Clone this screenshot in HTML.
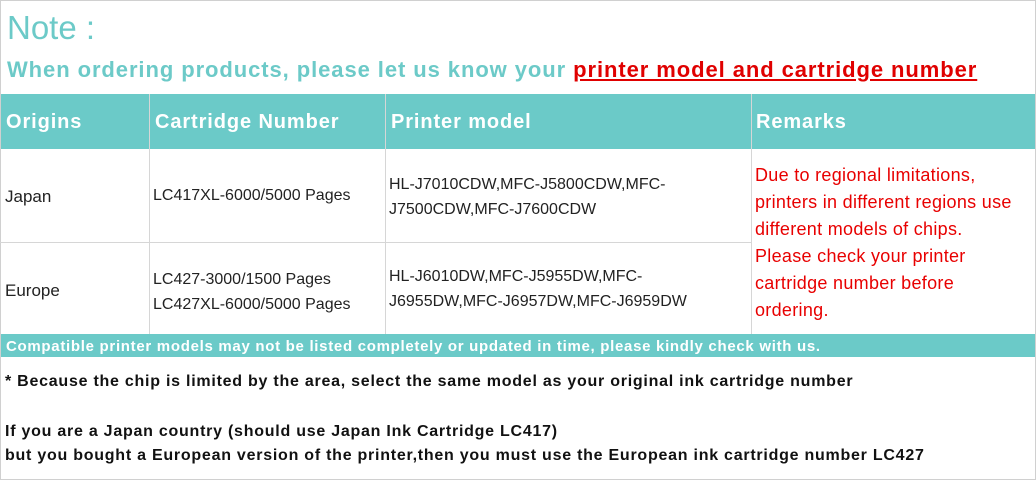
<!DOCTYPE html>
<html><head><meta charset="utf-8"><style>
*{margin:0;padding:0;box-sizing:border-box}
body{width:1036px;height:480px;background:#fff;position:relative;overflow:hidden;font-family:"Liberation Sans",Arial,sans-serif}
.a{position:absolute;white-space:nowrap}
.t{color:#6ccac8}
.hd{background:#6bcac8;color:#fff;font-weight:bold;font-size:20px;letter-spacing:0.9px}
.v{position:absolute;width:1px;background:#d6d6d6}
.h{position:absolute;height:1px;background:#d6d6d6}
.c{color:#222;font-size:16px}
.r{color:#e80000;font-size:18px;line-height:27px;letter-spacing:0.3px}
.b{color:#111;font-weight:bold;font-size:16px;letter-spacing:0.75px}
</style></head><body>
<div style="position:absolute;left:0;top:0;width:1036px;height:480px;border:1px solid #d0d0d0"></div>
<div class="a t" style="left:7px;top:9px;font-size:33px">Note :</div>
<div class="a t" style="left:7px;top:57px;font-size:22px;font-weight:bold;letter-spacing:0.92px">When ordering products, please let us know your <span style="color:#e00000;text-decoration:underline">printer model and cartridge number</span></div>
<div class="a hd" style="left:1px;top:94px;width:1034px;height:55px"></div>
<div class="a hd" style="left:6px;top:111px;background:none">Origins</div>
<div class="a hd" style="left:155px;top:111px;background:none">Cartridge Number</div>
<div class="a hd" style="left:391px;top:111px;background:none">Printer model</div>
<div class="a hd" style="left:756px;top:111px;background:none">Remarks</div>
<div class="v" style="left:149px;top:94px;height:240px"></div>
<div class="v" style="left:385px;top:94px;height:240px"></div>
<div class="v" style="left:751px;top:94px;height:240px"></div>
<div class="h" style="left:0;top:242px;width:751px"></div>
<div class="a c" style="left:5px;top:187px;font-size:17px">Japan</div>
<div class="a c" style="left:5px;top:281px;font-size:17px">Europe</div>
<div class="a c" style="left:153px;top:187px">LC417XL-6000/5000 Pages</div>
<div class="a c" style="left:153px;top:267px;line-height:25px">LC427-3000/1500 Pages<br>LC427XL-6000/5000 Pages</div>
<div class="a c" style="left:389px;top:172px;line-height:25px">HL-J7010CDW,MFC-J5800CDW,MFC-<br>J7500CDW,MFC-J7600CDW</div>
<div class="a c" style="left:389px;top:264px;line-height:25px">HL-J6010DW,MFC-J5955DW,MFC-<br>J6955DW,MFC-J6957DW,MFC-J6959DW</div>
<div class="a r" style="left:755px;top:162px">Due to regional limitations,<br>printers in different regions use<br>different models of chips.<br>Please check your printer<br>cartridge number before<br>ordering.</div>
<div class="a" style="left:1px;top:334px;width:1034px;height:23px;background:#6bcac8;color:#fff;font-weight:bold;font-size:15px;letter-spacing:0.7px;padding:4px 0 0 5px">Compatible printer models may not be listed completely or updated in time, please kindly check with us.</div>
<div class="a b" style="left:5px;top:373px">* Because the chip is limited by the area, select the same model as your original ink cartridge number</div>
<div class="a b" style="left:5px;top:423px">If you are a Japan country (should use Japan Ink Cartridge LC417)</div>
<div class="a b" style="left:5px;top:447px">but you bought a European version of the printer,then you must use the European ink cartridge number LC427</div>
</body></html>
